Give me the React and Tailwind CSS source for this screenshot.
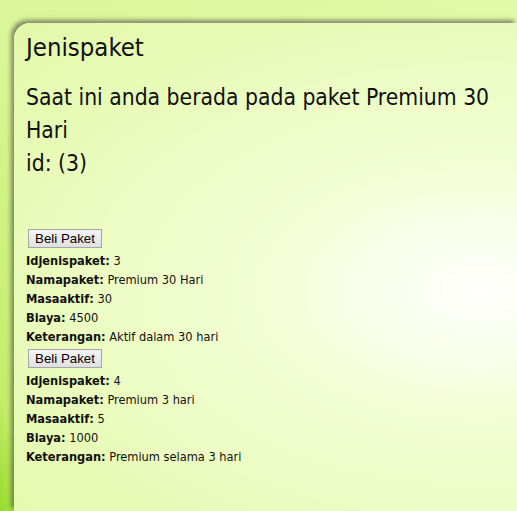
const packages = [
  { id: 3, nama: "Premium 30 Hari", masa: 30, biaya: 4500, ket: "Aktif dalam 30 hari" },
  { id: 4, nama: "Premium 3 hari", masa: 5, biaya: 1000, ket: "Premium selama 3 hari" },
];

export default function App() {
  return (
    <div className="h-[511px] overflow-hidden bg-[linear-gradient(70deg,#96da2a_0%,#c4ec6a_6%,#daf698_25%,#e2f9a6_100%)] pl-[14px] pt-[23px]">
      <div className="h-full rounded-tl-[16px] bg-[radial-gradient(ellipse_at_93%_55%,#ffffff_0%,#f4fed8_30%,#e9fbba_70%,#e3f8aa_100%)] pl-[12px] pt-[9px] shadow-[-3px_-3px_4px_rgba(70,70,70,0.6)] [font-family:'DejaVu_Sans_Condensed','DejaVu_Sans',sans-serif] text-[#111]">
        <h1 className="text-[25.5px] leading-[30px]">Jenispaket</h1>
        <p className="mt-[19px] w-[480px] text-[22.7px] leading-[33px]">
          Saat ini anda berada pada paket Premium 30 Hari
          <br />
          id: (3)
        </p>
        <div className="mt-[49px] text-[12.7px] leading-[19px]">
          {packages.map((p) => (
            <div key={p.id}>
              <button className="my-[3px] ml-[2px] block h-[19px] w-[74px] border border-[#a6a6a6] bg-[linear-gradient(#f4f4f4,#e0e0e0)] text-[13.3px] leading-[16px] text-black [font-family:'Liberation_Sans',Arial,sans-serif]">
                Beli Paket
              </button>
              <div>
                <b>Idjenispaket:</b> {p.id}
              </div>
              <div>
                <b>Namapaket:</b> {p.nama}
              </div>
              <div>
                <b>Masaaktif:</b> {p.masa}
              </div>
              <div>
                <b>Biaya:</b> {p.biaya}
              </div>
              <div>
                <b>Keterangan:</b> {p.ket}
              </div>
            </div>
          ))}
        </div>
      </div>
    </div>
  );
}
